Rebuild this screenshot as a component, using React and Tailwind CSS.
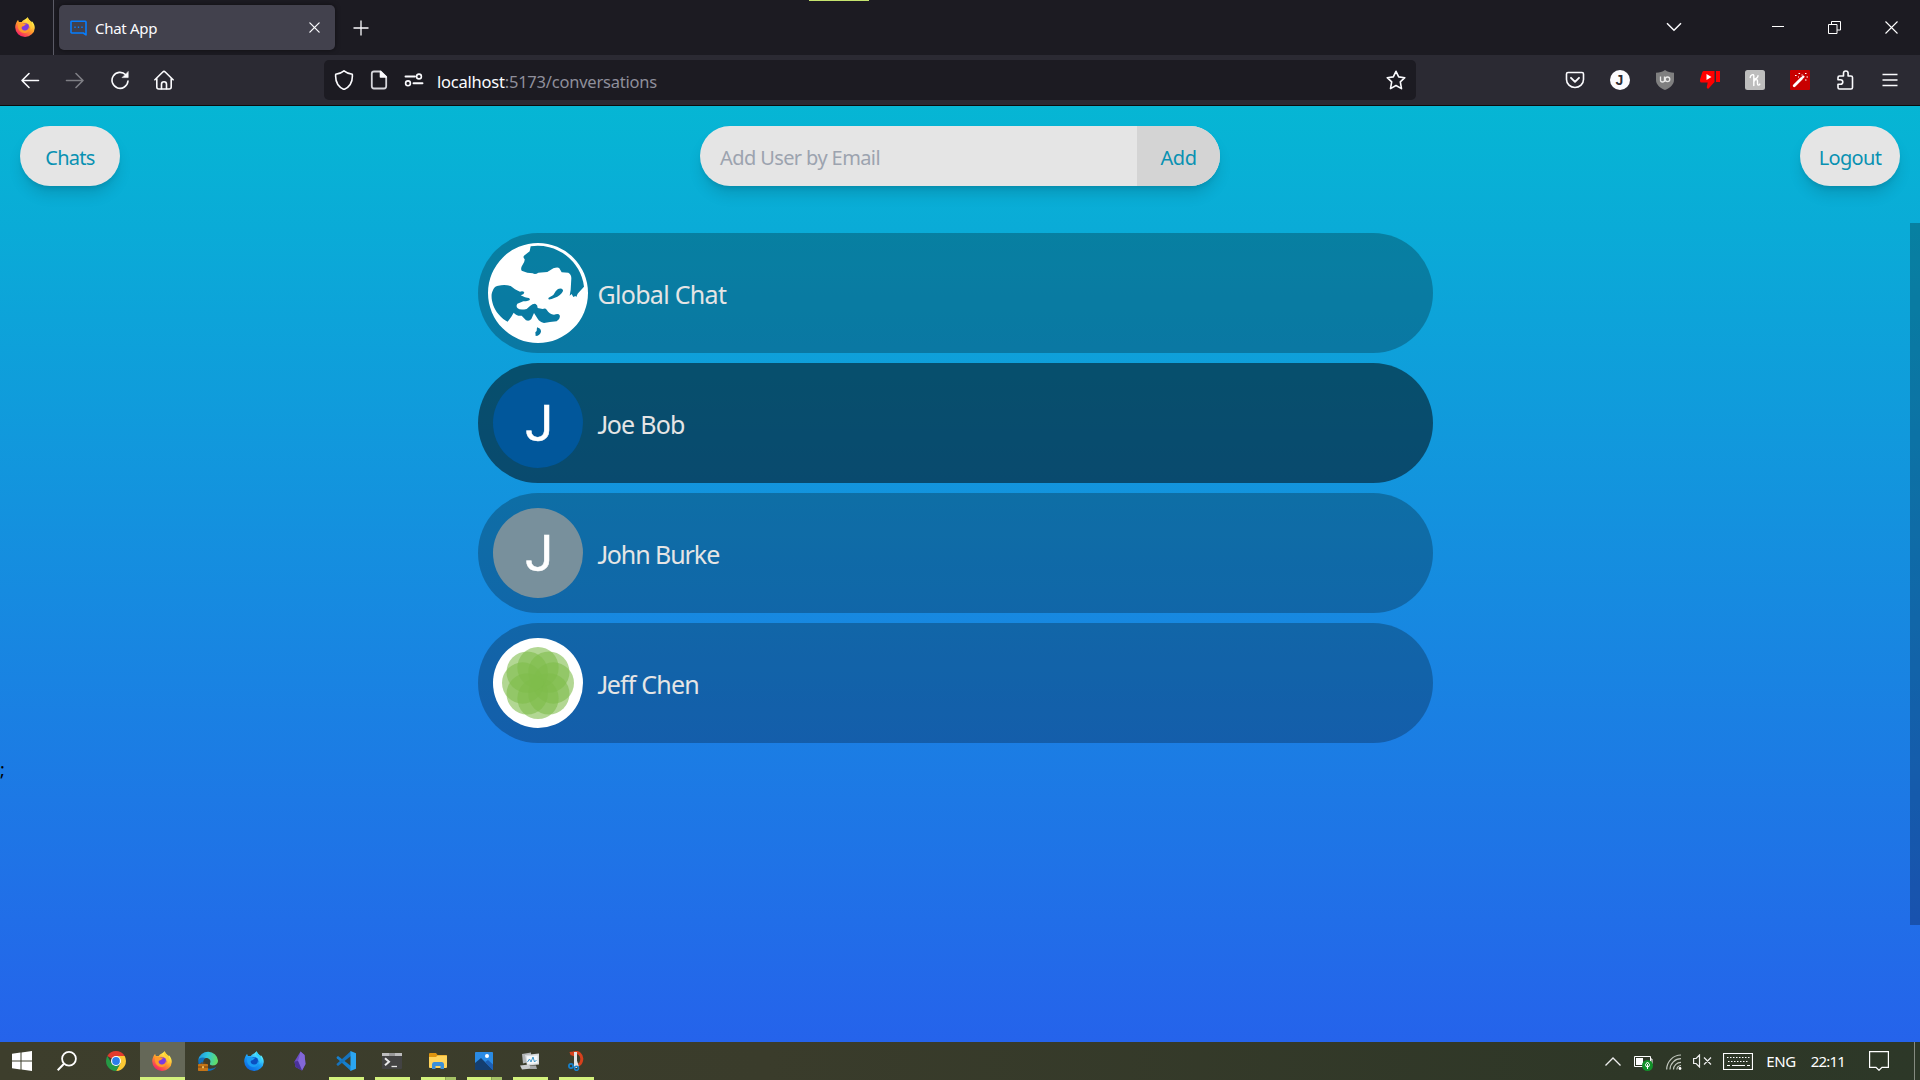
import React from "react";

const sans = "font-['Noto_Sans','Open_Sans',sans-serif]";

function FirefoxLogo({ id, blue = false, className = "size-5" }) {
  const c = blue
    ? ["#5ef0ff", "#1a9cf5", "#0a63e0", "#0b4fc0", "#2fd0ff"]
    : ["#fff44f", "#ff9a2a", "#f5156c", "#7a3be0", "#ffcf33"];
  return (
    <svg viewBox="0 0 20 20" className={className}>
      <defs>
        <linearGradient id={id} x1="0.85" y1="0.1" x2="0.25" y2="1">
          <stop offset="0.1" stopColor={c[0]} />
          <stop offset="0.5" stopColor={c[1]} />
          <stop offset="1" stopColor={c[2]} />
        </linearGradient>
      </defs>
      <path d="M2 4.2C2.6 3.4 3 3 3.2 3c.1.9.4 1.6.9 2.1C5 4.800 6 4.900 6.800 5.100 8 2.500 9.500 3.600 12.700.2c.5 1.600 1.300 2.500 2.600 3.700.5.5.8 1 1 1.600.3-.4.4-.9.4-1.400 2 2 3.100 4.400 3.100 6.800A9.800 9.600 0 0 1 10 20 9.800 9.600 0 0 1 .2 10.600C.2 8 .9 6 2 4.200Z" fill={`url(#${id})`} />
      <circle cx="10" cy="10.300" r="4.300" fill={c[3]} />
      <path d="M3 6.300c2-1 4.500-.8 6 .3 1-.3 2.200-.2 3 .3-1.500.1-2 .8-2.500 1.600-.6.9-2 .8-2.700 1.400C6.100 12 8.300 13.800 10.500 13.500c2.200-.3 3.600-2 3.300-4.200 1.300 2.800 0 6.300-3.700 6.700C6 16.300 3 13 3 9.500Z" fill={c[1]} />
      <path d="M12.700.2c-1.500 2.600-.4 4.300 1.500 5.800 2.200 1.900 2.400 4.700 1.300 7 2.300-2 2.500-5.300.8-7.500-.2-1.900-2.800-2.300-3.600-5.300Z" fill={c[4]} />
    </svg>
  );
}

function Line({ children, size = 20, className = "", w = 1.6 }) {
  return (
    <svg viewBox="0 0 20 20" width={size} height={size} fill="none" stroke="#fbfbfe" strokeWidth={w} strokeLinecap="round" strokeLinejoin="round" className={`shrink-0 ${className}`}>
      {children}
    </svg>
  );
}

function Cell({ children, className = "w-[45px]" }) {
  return <div className={`flex shrink-0 items-center justify-center ${className}`}>{children}</div>;
}

function TabBar() {
  return (
    <div className="flex h-[55px] items-stretch bg-[#1c1b22]">
      <div className="flex w-[53px] items-center pb-px pl-[15px]">
        <FirefoxLogo id="fx-tab" />
      </div>
      <div className="w-px bg-[#5b5b66]" />
      <div className="mt-[5px] ml-[5px] flex h-[45px] w-[276px] items-center rounded-[5px] bg-[#42414d] pr-[13px] pl-[11px] shadow-[0_0_5px_rgba(0,0,0,0.5)]">
        <svg viewBox="0 0 17 16" className="h-4 w-[17px]" fill="none" stroke="#057eff" strokeWidth="1.600" strokeLinejoin="round">
          <path d="M1.700 1.200h13.600a.7.7 0 0 1 .7.7v13L13.300 13H1.700A.7.7 0 0 1 1 12.300V1.900a.7.7 0 0 1 .7-.7Z" />
          <path d="M4.300 7.200h1.400M7.800 7.200h1.400M11.300 7.200h1.400" />
        </svg>
        <span className="mt-px ml-[8px] text-[15px] leading-5 tracking-[-0.3px] text-[#fbfbfe]">Chat App</span>
        <Line size={15} className="ml-auto" w={1.7}><path d="M3.800 3.800l12.400 12.400M16.200 3.800l-12.400 12.400" /></Line>
      </div>
      <div className="flex w-[52px] items-center justify-center">
        <svg viewBox="0 0 16 16" className="size-4" stroke="#fbfbfe" strokeWidth="1.300"><path d="M8 .5v15M.5 8h15" /></svg>
      </div>
      <div className="ml-auto flex items-center pb-px">
        <Cell className="mr-[60px] w-[30px]">
          <svg viewBox="0 0 16 10" className="h-[10px] w-4" fill="none" stroke="#fbfbfe" strokeWidth="1.500"><path d="M1 1.200l7 7 7-7" /></svg>
        </Cell>
        <Cell className="w-[57px]">
          <svg viewBox="0 0 12 12" className="size-3" stroke="#fff"><path d="M0 5.500h12" /></svg>
        </Cell>
        <Cell className="w-[57px]">
          <svg viewBox="0 0 13 13" className="size-[13px]" fill="none" stroke="#fff"><path d="M.5 3.500h8.500v9H.5zM3.500 3.500v-3h9v8.500H9" /></svg>
        </Cell>
        <Cell className="w-[57px]">
          <svg viewBox="0 0 13 13" className="size-[13px]" stroke="#fff" strokeWidth="1.100"><path d="M.5.5l12 12M12.500.5l-12 12" /></svg>
        </Cell>
      </div>
    </div>
  );
}

function NavBar() {
  return (
    <div className="flex h-[51px] items-center border-b border-[#0c0c0d] bg-[#2b2a33] pl-[7px]">
      <Cell><Line><path d="M18.500 10.500H2M9 3.500l-7 7 7 7" /></Line></Cell>
      <Cell><Line className="opacity-40"><path d="M1.500 10.500H18M11 3.500l7 7-7 7" /></Line></Cell>
      <Cell>
        <Line>
          <path d="M18 11a8 8 0 1 1-2.300-6.300" />
          <path d="M18.200 1.800v5.800h-5.800z" fill="#fbfbfe" strokeWidth="0.6" />
        </Line>
      </Cell>
      <Cell className="w-[45px] pr-px">
        <Line>
          <path d="M.9 9.800L8.800 2q1.200-1.200 2.400 0l7.900 7.800M2.800 8.500V17q0 2 2 2h10.400q2 0 2-2V8.500" />
          <path d="M7.500 18.800v-4.500a2.500 2.500 0 0 1 5 0v4.500" />
        </Line>
      </Cell>
      <div className="ml-[137px] flex h-10 w-[1092px] items-center rounded-[5px] bg-[#1c1b22] pr-[10px] pl-[10px]">
        <Line><path d="M10 .8C12.500 2.900 15 3.700 18.300 4.300 18.800 10.500 16.500 16.500 10 19.500 3.500 16.500 1.200 10.500 1.700 4.300 5 3.700 7.500 2.900 10 .8Z" /></Line>
        <Line className="ml-[15px]">
          <path d="M11.500 1.500H5q-2.200 0-2.200 2.200v12.600q0 2.200 2.200 2.200h10q2.200 0 2.200-2.200V7Z" stroke="#d5d5da" strokeWidth="1.800" />
          <path d="M11.500 1.500L17.200 7h-5.700z" fill="#fbfbfe" />
        </Line>
        <Line className="ml-[15px]">
          <path d="M1.500 6.500h9.500M9.500 13.300h9" strokeWidth="1.900" />
          <circle cx="15" cy="6.500" r="2.400" />
          <circle cx="4" cy="13.300" r="2.400" />
        </Line>
        <span className="mt-[4px] ml-[13px] text-[16.500px] leading-6 tracking-[-0.22px] whitespace-pre text-[#8f8f9b]"><span className="text-[#fbfbfe]">localhost</span>:5173/conversations</span>
        <Line className="ml-auto">
          <path d="M10 1.300l2.700 5.600 6.100.8-4.500 4.200 1.200 6.700L10 15.500l-5.500 3.100 1.200-6.700L1.200 7.700l6.100-.8z" />
        </Line>
      </div>
      <div className="ml-auto flex pr-2">
        <Cell>
          <Line><path d="M3 2.500h14q1.500 0 1.500 1.500v5.500a8.500 8 0 0 1-17 0V4Q1.500 2.500 3 2.500Z" /><path d="M6 7.800l4 4 4-4" strokeWidth="1.900" /></Line>
        </Cell>
        <Cell>
          <div className="flex size-5 items-center justify-center rounded-full bg-[#fbfbfe] font-['Liberation_Sans',sans-serif] text-[14px] leading-none font-bold text-[#2b2a33]">J</div>
        </Cell>
        <Cell>
          <svg viewBox="0 0 20 20" className="size-5">
            <path d="M10 0c2.500 1.800 5.500 2.500 9 2.800V10c0 4.500-4 8-9 10C5 18 1 14.500 1 10V2.800C4.500 2.500 7.500 1.800 10 0Z" fill="#7f7f80" />
            <path d="M5.500 6.500v3.800q0 1.700 2 1.700t2-1.700V6.500M9.600 6.800v5.200" stroke="#e8e8e8" strokeWidth="1.300" fill="none" />
            <circle cx="12.500" cy="9.300" r="2.300" stroke="#e8e8e8" strokeWidth="1.300" fill="none" />
          </svg>
        </Cell>
        <Cell>
          <svg viewBox="0 0 20 20" className="size-5" fill="#f00">
            <path d="M4 1h10.500v11L9.500 17.500 8 19l-1.300-1.500 1-5H1.500Q0 12.500 0 11v-1.500L2.300 2.300Q2.800 1 4 1ZM16 1h4v11h-4z" />
            <path d="M6.500 4l5 3-5 3z" fill="#fff" />
          </svg>
        </Cell>
        <Cell>
          <svg viewBox="0 0 20 20" className="size-5">
            <rect width="20" height="20" rx="2.500" fill="#bdbdbd" />
            <path d="M5.200 7.500C5.200 5 8.800 3.500 8.800 5.800V15.500M8.800 12c.6-2.500 3.700-3.500 3.700-.8v2.600c0 1.700 1.600 1.700 2.300.3M8.800 9.200c2 0 4.200-1.700 4.200-3.500" fill="none" stroke="#fff" strokeWidth="1.400" strokeLinecap="round" />
          </svg>
        </Cell>
        <Cell>
          <svg viewBox="0 0 20 20" className="size-5">
            <rect width="20" height="20" rx="1" fill="#c80000" />
            <path d="M4.200 15.800l7.300-7.300" stroke="#fff" strokeWidth="2.800" strokeLinecap="round" />
            <path d="M12 8l2-2" stroke="#fff" strokeWidth="2.400" />
            <path d="M5 5.500h1.600M8.500 3.500h1.600M11.500 5h1.200M15 3.500h1.500M16.500 7h1.500M15 10h1.500M8 7h1" stroke="#fff" strokeWidth="1.200" />
          </svg>
        </Cell>
        <Cell>
          <Line>
            <path d="M4.500 6h4V3.300a2.300 2.300 0 0 1 4.600 0V6H16q1.500 0 1.500 1.500v10q0 1.500-1.500 1.500H4.500Q3 19 3 17.500v-3.200h2.500a2.300 2.300 0 0 0 0-4.600H3V7.500Q3 6 4.500 6Z" />
          </Line>
        </Cell>
        <Cell>
          <svg viewBox="0 0 16 14" className="h-[14px] w-4" stroke="#fbfbfe" strokeWidth="1.400"><path d="M.5 1.500h15M.5 7h15M.5 12.500h15" /></svg>
        </Cell>
      </div>
    </div>
  );
}

function Globe() {
  return (
    <svg viewBox="54 54 300 300" className="size-[100px]" fill="#fff" fillRule="evenodd">
      <path d="M204 54A150 150 0 1 1 204 354A150 150 0 1 1 204 54Z
        M182 64L179 79 162 92Q158 97 164 103 165 110 157 121 151 130 155 137L172 143 188 145Q196 150 205 143L232 141 250 130Q264 125 268 130L275 142 295 143Q304 148 304 160L302 195 299 212 305 207 310 216 316 213 319 216 323 206 331 197 342 185A140 140 0 0 0 182 64Z
        M65 207C70 190 74 183 85 182Q105 178 122 183L135 193 150 200Q160 197 163 203 162 208 152 211L165 217Q180 219 180 223 178 229 160 229L142 236Q137 244 143 250 150 256 170 252L180 243Q190 235 197 237 203 240 203 249L218 252Q226 248 230 254 238 267 252 269 266 264 269 271 272 281 260 289L240 291 222 294Q207 290 204 283L192 264 184 282Q178 290 168 286L155 272Q140 274 131 263L124 275 113 290Q100 285 85 267C70 250 63 225 65 207Z
        M236 218L250 210Q256 197 264 192 274 188 279 195 280 204 262 215L245 222Q232 226 236 218Z
        M201 307Q213 310 213 320 210 332 197 333L196 322 200 318Z" />
    </svg>
  );
}

function Flower() {
  return (
    <svg viewBox="69 69 270 270" className="size-[90px] rounded-full bg-white" fill="#7ebc4b" fillOpacity="0.6">
      {[0, 45, 90, 135, 180, 225, 270, 315].map((a) => (
        <circle key={a} cx="204" cy="158" r="62" transform={`rotate(${a} 204 204)`} />
      ))}
    </svg>
  );
}

function Letter({ className }) {
  return (
    <div className={`flex size-[90px] items-center justify-center rounded-full pt-[2px] pl-[3px] font-['Roboto',sans-serif] text-[50px] leading-none text-white [-webkit-text-stroke:0.5px_white] ${className}`}>
      J
    </div>
  );
}

function Name({ text }) {
  if (text[0] !== "J") return text;
  return (
    <>
      <span className="font-['Lato',sans-serif] tracking-[-1.400px]">J</span>
      {text.slice(1)}
    </>
  );
}

const conversations = [
  { name: "Global Chat", avatar: <Globe />, tracking: "tracking-[-0.7px]" },
  { name: "Joe Bob", avatar: <Letter className="bg-[#01579b]" />, active: true, tracking: "tracking-[-0.75px]" },
  { name: "John Burke", avatar: <Letter className="bg-[#78909c]" />, tracking: "tracking-[-1.050px]" },
  { name: "Jeff Chen", avatar: <Flower />, tracking: "tracking-[-0.8px]" },
];

function Page() {
  const shadow = "shadow-[0_10px_15px_-3px_rgba(0,0,0,0.15),0_4px_6px_-4px_rgba(0,0,0,0.15)]";
  return (
    <main className="h-[936px] bg-[linear-gradient(to_bottom,#06b6d4,#2563eb)] text-black">
      <header className="flex h-[117px] justify-between px-5 pt-5 text-[20px] text-[#0891b2]">
        <button className={`h-[60px] w-[100px] rounded-full bg-[#e5e5e5] pt-[3px] tracking-[-0.75px] ${shadow}`}>Chats</button>
        <div className={`flex h-[60px] w-[520px] overflow-hidden rounded-full bg-[#e5e5e5] ${shadow}`}>
          <div className="flex w-[437px] items-center pt-[3px] pl-5 tracking-[-0.6px] text-[#9ca3af]">Add User by Email</div>
          <button className="flex-1 bg-[#d4d4d4] pt-[3px] tracking-[-0.4px]">Add</button>
        </div>
        <button className={`h-[60px] w-[100px] rounded-full bg-[#e5e5e5] pt-[3px] tracking-[-0.7px] ${shadow}`}>Logout</button>
      </header>
      <div className="flex h-[702px]">
        <div className="flex-1 pt-[10px]">
          {conversations.map((c) => (
            <div key={c.name} className={`mx-auto mb-[10px] flex h-[120px] w-1/2 items-center rounded-full pl-[10px] ${c.active ? "bg-black/50" : "bg-black/25"}`}>
              <div className="flex size-[100px] items-center justify-center">{c.avatar}</div>
              <span className={`mt-[3px] ml-[10px] text-[25px] whitespace-pre text-[#e5e5e5] ${c.tracking}`}><Name text={c.name} /></span>
            </div>
          ))}
          <div className="mt-[11px] text-[18px] leading-[30px]">;</div>
        </div>
        <div className="w-[10px] bg-black/25" />
      </div>
    </main>
  );
}

function AppCell({ children, className = "", bar }) {
  return (
    <div className={`mr-px flex h-[38px] w-[45px] flex-col items-center ${className}`}>
      <div className="flex flex-1 items-center justify-center pt-[3px] pr-px">{children}</div>
      <div className={`flex h-[3px] justify-end ${bar === "full" ? "w-full bg-[#d3f17c]" : bar ? "w-[35px] bg-[#d3f17c]" : ""}`}>
        {bar === "split" && <div className="w-[11px] border-l border-[#8ba64f] bg-[#a5c265]" />}
      </div>
    </div>
  );
}

function Taskbar() {
  return (
    <footer className="flex h-[38px] items-center bg-[linear-gradient(to_right,#3d3e2c,#3a3c2b_40%,#2e3727_85%,#2d3828)] text-white">
      <Cell className="w-[45px] pr-px">
        <svg viewBox="0 0 20 20" className="size-5" fill="#fff"><path d="M0 2.800L8.500 1.600V9.500H0zM9.500 1.500L20 0v9.500H9.500zM0 10.500h8.500v8L0 17.300zM9.500 10.500H20V20L9.500 18.600z" /></svg>
      </Cell>
      <Cell className="mr-[4px] w-[45px] pr-px">
        <svg viewBox="0 0 20 20" className="size-5" fill="none" stroke="#fff" strokeWidth="1.800"><circle cx="12" cy="7.800" r="6.900" /><path d="M7 12.800L.7 19.200" strokeWidth="2" /></svg>
      </Cell>
      <AppCell>
        <svg viewBox="0 0 20 20" className="size-5">
          <path d="M10 10L1.340 5A10 10 0 0 1 18.660 5z" fill="#e33b2e" />
          <path d="M10 5H18.660A10 10 0 0 1 10 20L14.330 12.500z" fill="#fcc934" />
          <path d="M1.340 5A10 10 0 0 0 10 20L14.330 12.500 10 10 5.670 12.500z" fill="#259a45" />
          <circle cx="10" cy="10" r="5" fill="#fff" />
          <circle cx="10" cy="10" r="3.900" fill="#2b7de9" />
        </svg>
      </AppCell>
      <AppCell className="bg-[#656858]" bar="full"><FirefoxLogo id="fx-task" /></AppCell>
      <AppCell>
        <svg viewBox="0 0 20 20" className="size-5">
          <defs>
            <linearGradient id="edge" x1="0" y1="0" x2="1" y2="0.2"><stop stopColor="#1b8fe0" /><stop offset="0.5" stopColor="#2fc5dc" /><stop offset="1" stopColor="#5fdc6a" /></linearGradient>
          </defs>
          <path d="M.2 9A10 10 0 0 1 20 9.500c0 3.500-2.500 4.900-5 4.900-2.200 0-3.500-.9-3-2 1.500-2.800-.5-5.400-4-5.400C4 7 1 8 .2 9Z" fill="url(#edge)" />
          <path d="M.2 9C1 7 4 5.500 8 7c-3 1-3.500 5-1.500 8 2.500 3.500 8 3.500 12 .5C16 19 13 20 10 20 4 19.500 0 15 .2 9Z" fill="#1170bb" />
          <rect x="0" y="13" width="10" height="7" rx="0.8" fill="#c57416" />
          <path d="M3 13v-1h4v1M0 16h10" stroke="#7b430b" fill="none" />
          <rect x="4.200" y="15.200" width="1.600" height="2" fill="#ffd36b" />
        </svg>
      </AppCell>
      <AppCell><FirefoxLogo id="fx-dev" blue /></AppCell>
      <AppCell>
        <svg viewBox="0 0 12 20" className="h-5 w-3">
          <path d="M6.500.5L10.500 4l1 9-3.500 6.500L1.500 16 .5 10.500z" fill="#6c4cc4" />
          <path d="M6.500.5L4 10l4 9.500 3.500-6.500-1-9z" fill="#8267d8" /><path d="M.5 10.500L4 10l4 9.500L1.500 16z" fill="#4a3199" />
        </svg>
      </AppCell>
      <AppCell bar="on">
        <svg viewBox="0 0 20 20" className="size-5">
          <path d="M.5 6.200L2 5l13 10v5L.8 7.200z" fill="#1580cf" /><path d="M.5 13.800L2 15l13-10V0L.8 12.800z" fill="#1673bd" />
          <path d="M14.500 0L20 2.300v15.400L14.500 20z" fill="#2ba6f2" />
        </svg>
      </AppCell>
      <AppCell bar="on">
        <svg viewBox="0 0 20 16" className="h-4 w-5">
          <rect width="20" height="16" rx="0.8" fill="#434343" /><path d="M0 0h20v3H0z" fill="#bdbdbd" /><path d="M7 0h6v3H7z" fill="#999" />
          <path d="M3 5.200l4 3.500-4 3.500" fill="none" stroke="#e8e8e8" strokeWidth="2" /><path d="M9.500 13.500h5.500" stroke="#e8e8e8" strokeWidth="1.300" />
        </svg>
      </AppCell>
      <AppCell bar="split">
        <svg viewBox="0 0 18 16" className="h-4 w-[18px]">
          <path d="M0 1q0-1 1-1h6l1.500 2H17q1 0 1 1v3H0z" fill="#dd9410" /><path d="M0 4h7l1.500-1.500H18V14q0 1-1 1H1q-1 0-1-1z" fill="#ffd35b" />
          <path d="M3 16V11.500Q3 9 5 9h8q2 0 2 2.500V16h-3.500v-3h-5v3z" fill="#3a8fd9" />
        </svg>
      </AppCell>
      <AppCell bar="split">
        <svg viewBox="0 0 18 18" className="size-[18px]">
          <rect width="18" height="18" rx="0.8" fill="#2a8be4" /><path d="M0 11l6-5 12 12H0z" fill="#143e70" /><path d="M10 10l3-2 5 4.500V18z" fill="#1d5fb4" /><circle cx="12" cy="4" r="2" fill="#fff" />
        </svg>
      </AppCell>
      <AppCell bar="on">
        <svg viewBox="0 0 20 18" className="h-[18px] w-5">
          <path d="M2 2l9-1.500v9L3 11.500z" fill="#b3b6b8" /><path d="M0 13.500l9-1 3 4-10 1z" fill="#c9cbcc" />
          <path d="M5 3l14-1.500v11L7 13.500z" fill="#d7dadb" /><path d="M6.500 4.300l11-.9v7.800l-10 .8z" fill="#f5f8fa" /><path d="M7.500 10l2-3 1.500 3 2-5 1.500 5 2-2" fill="none" stroke="#3d95c7" />
          <path d="M10 13.500h6l1 3.500H10z" fill="#a5a8aa" />
        </svg>
      </AppCell>
      <AppCell bar="on">
        <svg viewBox="0 0 16 20" className="h-5 w-4">
          <path d="M5 2.500C10-.5 15 4 13.500 10c-.5 2-1.500 3.500-3 4" fill="none" stroke="#d6401c" strokeWidth="3" /><path d="M1.500 1l5-.5v5L2.500 4z" fill="#d6401c" />
          <path d="M7.500 1v16M7.500 10l2 6" stroke="#dfe3e6" strokeWidth="3" />
          <circle cx="3" cy="15" r="2.100" fill="none" stroke="#1682cf" strokeWidth="1.700" /><circle cx="8.500" cy="17.300" r="2" fill="none" stroke="#1682cf" strokeWidth="1.600" />
        </svg>
      </AppCell>
      <div className="ml-auto flex h-full items-center text-[15px]">
        <svg viewBox="0 0 16 9" className="mr-[13px] h-[9px] w-4" fill="none" stroke="#eee" strokeWidth="1.300"><path d="M.5 8.500L8 1l7.500 7.500" /></svg>
        <svg viewBox="0 0 19 16" className="mt-[4px] mr-[13px] h-4 w-[19px]">
          <path d="M.5 1.500h16v10H.5zM17 4h1v5h-1" fill="none" stroke="#fff" /><path d="M2 3h7v7H2z" fill="#fff" />
          <circle cx="13.500" cy="10.500" r="5.500" fill="#12912a" /><path d="M13.500 14V9M11.500 9.500q0 2.500 2 2.500t2-2.500l-2-2.500z" fill="none" stroke="#fff" />
        </svg>
        <svg viewBox="0 0 16 16" className="mt-[2px] mr-[11px] size-4" fill="none" stroke="#c3c8bf" strokeWidth="1.200">
          <path d="M.7 15.500A14.500 14.500 0 0 1 15 1M4 15.500A11 11 0 0 1 15 4.700M7.500 15.500A7.500 7.500 0 0 1 15 8.300M10.800 15.500A4.500 4.500 0 0 1 15 11.500" /><circle cx="14" cy="14.500" r="1.400" fill="#fff" stroke="none" />
        </svg>
        <svg viewBox="0 0 19 14" className="mr-[11px] h-[14px] w-[19px]" fill="none" stroke="#eee" strokeWidth="1.200"><path d="M.6 4.500h2.500L6.500 1v12L3.100 9.500H.6zM11 3.500l7 7M18 3.500l-7 7" /></svg>
        <svg viewBox="0 0 30 17" className="mr-[13px] h-[17px] w-[30px]" fill="none" stroke="#fff">
          <path d="M.5.500h29v16H.5z" strokeWidth="1.200" /><path d="M4 4.500h23M5 8.500h21" strokeDasharray="1.500 1.500" /><path d="M4 12.500h3M9 12.500h13M24 12.500h3" />
        </svg>
        <span className="mr-[15px] tracking-[-0.4px]">ENG</span>
        <span className="mr-[24px] tracking-[-0.8px]">22:11</span>
        <svg viewBox="0 0 20 20" className="mr-[25px] size-5" fill="none" stroke="#fff" strokeWidth="1.200"><path d="M.6.600h18.800v15.800H13L10 19.300 7 16.400H.6z" /></svg>
        <div className="mr-[5px] h-full w-px bg-[#858b80]" />
      </div>
    </footer>
  );
}

export default function App() {
  return (
    <div className={`relative flex h-[1080px] w-[1920px] flex-col overflow-hidden ${sans}`}>
      <TabBar />
      <NavBar />
      <Page />
      <Taskbar />
      <div className="absolute top-0 left-[809px] h-px w-[60px] bg-[#c5e36e]" />
    </div>
  );
}
